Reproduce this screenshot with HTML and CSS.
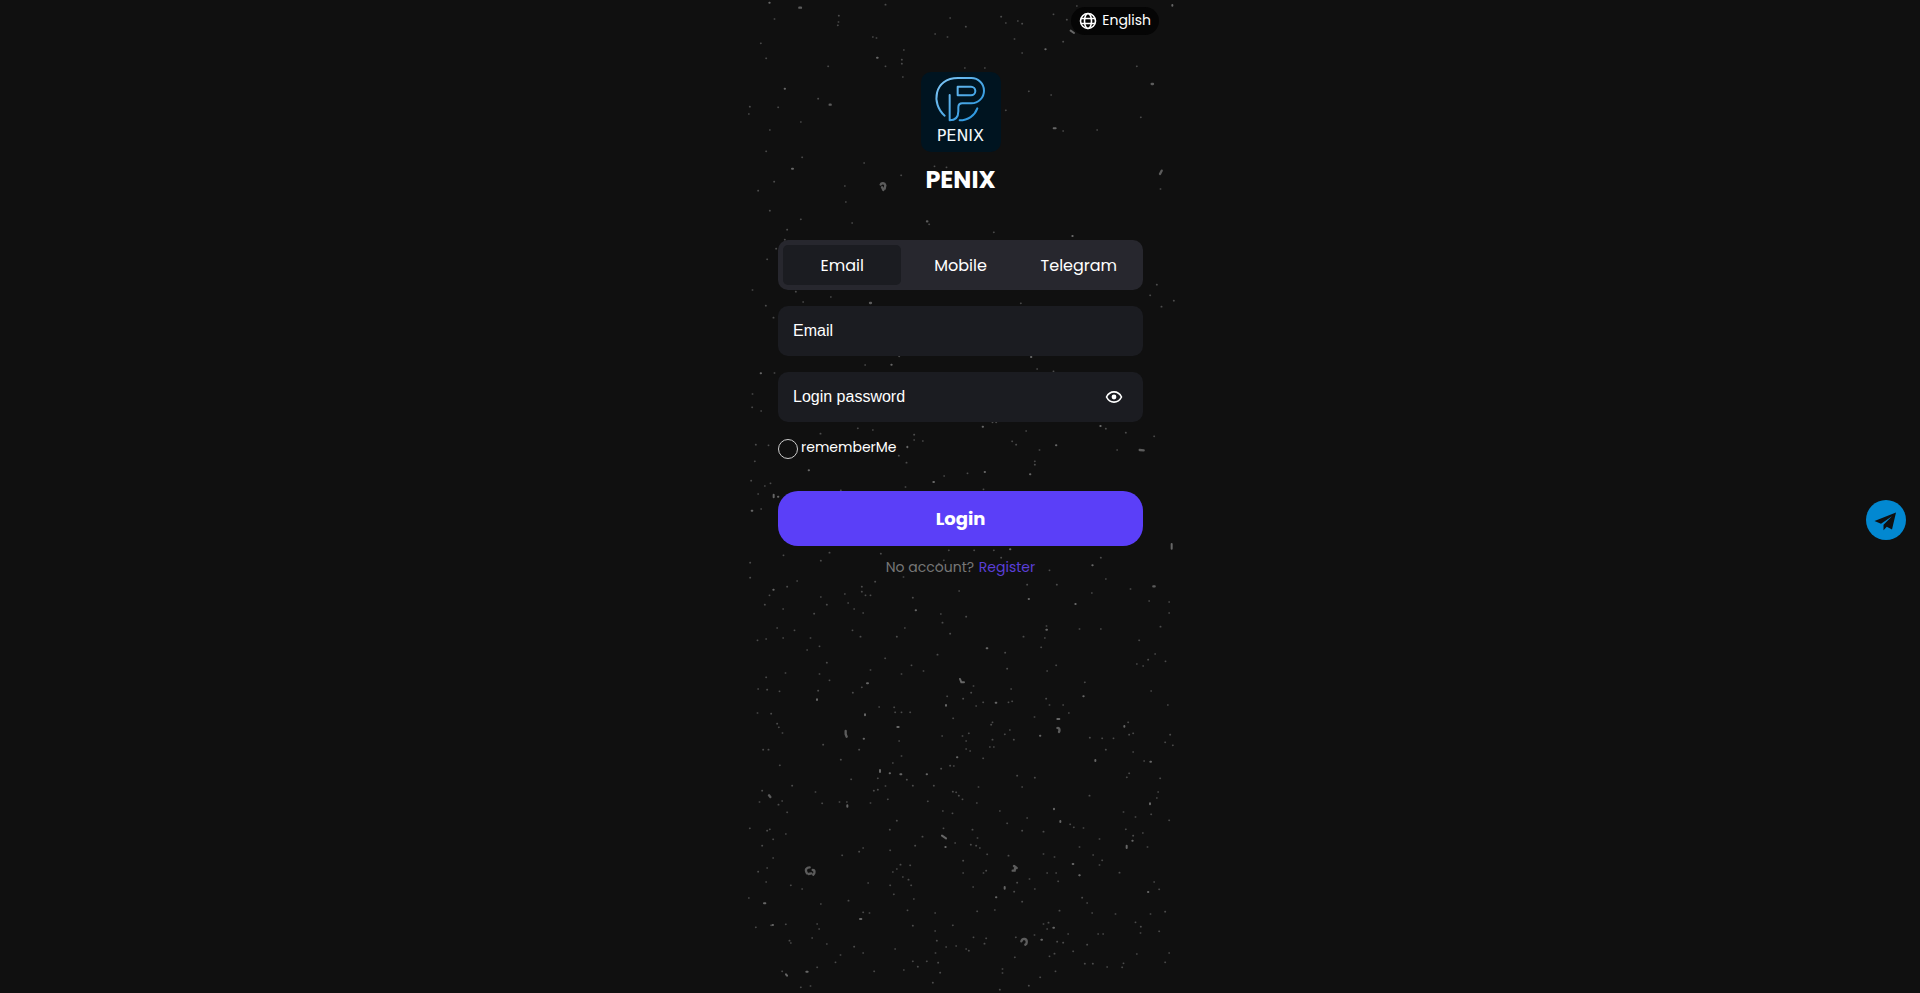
FILE: index.html
```html
<!DOCTYPE html>
<html lang="en">
<head>
  <meta charset="UTF-8">
  <meta name="viewport" content="width=device-width, initial-scale=1.0">
  <title>PENIX</title>
  <link rel="stylesheet" href="styles.css">
</head>
<body>
  <div class="page">
    <!-- dust specks behind the form -->
    <svg class="dust" viewBox="15 0 1290 2979" preserveAspectRatio="xMidYMin slice" aria-hidden="true">
      <path class="dust-small" d="M62 130h1M78 175h1M103 57h1M296 47h1M295 66h1M293 76h1M436 14h1M630 54h1M677 80h1M585 102h1M622 111h1M398 111h1M409 114h1M264 199h1M491 150h1M485 179h1M485 191h1M436 199h1M488 231h1M674 204h1M734 204h1M783 50h1M797 69h1M833 63h1M846 71h1M823 117h1M846 159h1M940 43h1M980 59h1M969 125h1M1010 18h1M1190 199h1M866 274h1M933 285h1M797 331h1M234 296h1M114 322h1M26 342h1M29 320h1M182 366h1M89 390h1M78 454h1M186 472h1M372 489h1M483 526h1M102 545h1M54 572h1M314 558h1M317 606h1M89 632h1M182 658h1M1202 352h1M969 393h1M1071 390h1M1261 567h1M619 502h1M583 499h1M141 689h1M134 719h1M108 746h1M81 778h1M336 669h1M567 673h1M761 697h1M37 870h1M167 875h1M272 891h1M189 906h1M77 917h1M100 953h1M842 910h1M1250 854h1M1230 886h1M1301 902h1M1264 920h1M477 1069h1M375 1095h1M103 1119h1M37 1182h1M891 1107h1M940 1114h1M36 1222h1M63 1233h1M353 1285h1M398 1290h1M241 1301h1M522 1304h1M522 1320h1M548 1323h1M85 1336h1M47 1334h1M44 1384h1M476 1367h1M499 1388h1M33 1442h1M74 1458h1M91 1450h1M54 1482h1M63 1527h1M302 1471h1M496 1461h1M730 1468h1M612 1428h1M682 1420h1M884 1384h1M884 1394h1M816 1324h1M828 1334h1M898 1350h1M858 1293h1M757 1267h1M768 1267h1M1157 1298h1M1242 1309h1M1131 1350h1M1097 1286h1M130 1666h1M268 1658h1M242 1682h1M30 1688h1M422 1661h1M626 1651h1M702 1651h1M761 1651h1M783 1673h1M611 1681h1M596 1691h1M1082 1673h1M1097 1737h1M928 1711h1M490 1731h1M405 1745h1M365 1760h1M365 1775h1M376 1786h1M391 1786h1M88 1786h1M141 1760h1M171 1743h1M314 1782h1M242 1791h1M30 1733h1M324 1809h1M74 1814h1M260 1814h1M129 1827h1M342 1827h1M369 1839h1M222 1841h1M518 1793h1M657 1773h1M602 1842h1M678 1850h1M607 1868h1M494 1884h1M470 1910h1M111 1884h1M163 1891h1M337 1891h1M361 1910h1M52 1921h1M78 1917h1M129 1914h1M211 1914h1M238 1939h1M201 1950h1M630 1901h1M592 1964h1M435 1975h1M260 1988h1M514 1996h1M550 2013h1M391 2010h1M136 2019h1M238 2022h1M484 2022h1M78 2032h1M268 2041h1M365 2062h1M338 2078h1M54 2067h1M81 2069h1M118 2074h1M234 2072h1M795 1958h1M801 2006h1M921 2013h1M948 1996h1M903 1942h1M850 1910h1M914 1914h1M919 1878h1M1018 1887h1M1082 1887h1M1055 1779h1M1171 1767h1M950 1754h1M861 1754h1M1227 1803h1M1287 1806h1M1287 1839h1M1261 1880h1M1197 1921h1M1245 1962h1M1224 1979h1M1276 1984h1M1190 1992h1M1209 1998h1M1034 2047h1M1233 2073h1M1283 2115h1M813 2067h1M700 2058h1M693 2078h1M669 2096h1M621 2089h1M708 2118h1M729 2107h1M805 2107h1M816 2104h1M918 2096h1M928 2115h1M969 2115h1M986 2139h1M883 2151h1M639 2155h1M757 2167h1M753 2174h1M809 2190h1M794 2203h1M821 2219h1M757 2219h1M749 2241h1M761 2241h1M686 2200h1M667 2208h1M678 2223h1M606 2208h1M678 2247h1M690 2253h1M729 2275h1M630 2297h1M603 2306h1M641 2298h1M462 2122h1M465 2137h1M484 2137h1M510 2137h1M417 2121h1M52 2139h1M93 2141h1M111 2171h1M116 2182h1M127 2199h1M477 2223h1M484 2268h1M458 2289h1M357 2249h1M249 2234h1M302 2279h1M69 2249h1M85 2249h1M119 2296h1M333 2338h1M500 2339h1M413 2335h1M831 2327h1M884 2333h1M1049 2213h1M1086 2215h1M1120 2215h1M1179 2200h1M1167 2204h1M1164 2167h1M1290 2204h1M1275 2227h1M1298 2236h1M1097 2249h1M1179 2256h1M1212 2283h1M1167 2320h1M1160 2332h1M1260 2335h1"/>
      <path class="dust-small" d="M156 2357h1M226 2376h1M66 2372h1M58 2406h1M115 2414h1M126 2403h1M141 2437h1M246 2410h1M298 2406h1M320 2406h1M391 2409h1M401 2372h1M413 2369h1M443 2398h1M436 2358h1M518 2357h1M581 2357h1M563 2404h1M608 2433h1M637 2440h1M638 2375h1M648 2377h1M656 2387h1M667 2398h1M710 2409h1M715 2361h1M779 2433h1M846 2361h1M801 2470h1M861 2454h1M846 2492h1M910 2495h1M990 2473h1M1001 2482h1M1030 2484h1M1048 2387h1M1078 2517h1M1186 2451h1M1150 2436h1M1157 2488h1M1179 2507h1M1208 2499h1M1233 2443h1M1254 2376h1M1250 2394h1M1287 2461h1M1222 2541h1M1018 2541h1M1059 2565h1M1086 2581h1M1078 2595h1M910 2562h1M943 2571h1M921 2619h1M948 2619h1M954 2644h1M1018 2626h1M868 2637h1M831 2648h1M884 2667h1M822 2675h1M805 2567h1M741 2563h1M719 2544h1M708 2537h1M692 2534h1M712 2514h1M697 2489h1M645 2529h1M669 2582h1M669 2619h1M730 2619h1M738 2612h1M699 2661h1M547 2510h1M525 2537h1M610 2485h1M470 2462h1M449 2489h1M450 2551h1M369 2544h1M357 2555h1M306 2566h1M481 2594h1M510 2596h1M470 2607h1M458 2616h1M488 2631h1M505 2639h1M450 2656h1M461 2683h1M521 2697h1M513 2656h1M384 2649h1M186 2667h1M152 2656h1M78 2646h1M81 2604h1M54 2615h1M99 2574h1M66 2537h1M99 2518h1M81 2492h1M89 2488h1M137 2502h1M29 2485h1M26 2694h1M325 2702h1M242 2712h1M369 2737h1M388 2739h1M502 2731h1M585 2739h1M711 2734h1M764 2730h1M846 2705h1M958 2732h1M1026 2693h1M1041 2709h1M1056 2739h1M1126 2742h1M1186 2767h1M1202 2780h1M1201 2799h1M1231 2742h1M1275 2735h1M1257 2668h1M1242 2646h1M1138 2618h1M1257 2794h1M1287 2859h1M1190 2862h1M1275 2887h1M1150 2890h1M1146 2902h1M1101 2901h1M1058 2891h1M1034 2891h1M1041 2834h1M1074 2802h1M1089 2802h1M984 2802h1M999 2854h1M943 2861h1M928 2869h1M951 2825h1M969 2828h1M921 2787h1M910 2772h1M925 2768h1M883 2805h1M827 2812h1M824 2872h1M787 2907h1M787 2919h1M900 2932h1M946 2914h1M866 2957h1M779 2969h1M738 2815h1M733 2831h1M700 2812h1M678 2847h1M686 2852h1M648 2838h1M618 2841h1M590 2822h1M586 2859h1M585 2793h1M638 2776h1M518 2777h1M465 2847h1M560 2884h1M594 2888h1M533 2900h1M518 2884h1M491 2910h1M402 2914h1M600 2918h1M578 2948h1M369 2859h1M342 2840h1M301 2865h1M286 2887h1M231 2902h1M260 2832h1M216 2814h1M148 2822h1M152 2829h1M231 2772h1M237 2787h1M137 2773h1M93 2776h1M47 2782h1M126 2914h1M182 2962h1M211 2958h1"/>
      <path class="dust-mid" d="M88 8h1M134 266h1M411 173h2M916 148h1M941 385h6M1297 15v2M156 506h3M992 92l10 7M502 1340v2M35 1532h2M206 1411h1M580 1446h2M734 1416h1M870 1423h1M948 1336h1M728 1280h1M1081 1278h1M101 1484v8M114 1490h1M810 1648h1M1057 1696h1M100 1769h1M1295 1632v14M527 1831h1M866 1797h1M1006 1812h1M740 1945h2M919 1889h2M381 2050h3M231 2098v2M1030 2089h1M660 2037l4 10h8M618 2115v2M767 2108h2M375 2143v3M472 2181h4M371 2216h1M420 2310v6M449 2320h1M481 2323h3M560 2323h1M651 2272h1M900 2207h1M952 2157h6M1153 2178v2M1231 2285h2M1066 2280v3M873 1071h1M454 1094h1M62 1120h1M997 708h1M942 2426v2M961 2463v3M1160 2537v7M1230 2410v3M1177 2522h1M998 2592h2M1018 2626h1M794 2661v5M768 2692h1M1224 2676h1M72 2710h4M360 2757h4M322 2416v4M606 2507l12 8M616 2541h1M904 2819h2M940 2783h2M138 2923l3 4M199 2915h4M98 2775h1"/>
      <path class="dust-big" d="M178 23h5M269 314h3M1235 252h4M1265 512l-5 10M422 554c2-6 12-6 14 2l-2 10M426 562l4 8M561 664h1M390 909h3M1199 1350l12 1M1240 1759h4M317 2193v10l3 7M952 2184c6-2 8 6 5 12M87 2386l4 5M201 2620c-8-12 0-18 8-18M206 2622l8-2M218 2610c8 0 6 12 2 14M822 2598l8 6M818 2612h6l1-6M844 2824c4-12 18-8 16 4q0 4-4 6"/>
    </svg>

    <header class="topbar">
      <button type="button" class="lang">
        <svg class="lang-icon" viewBox="0 0 18 18" aria-hidden="true">
          <circle cx="9" cy="9" r="7.500"/>
          <ellipse cx="9" cy="9" rx="3.500" ry="7.500"/>
          <path d="M2 6.500h14M2 11.500h14"/>
        </svg>
        English
      </button>
    </header>

    <main class="content">
      <svg class="logo" viewBox="0 0 240 240" role="img" aria-label="PENIX logo">
        <defs>
          <linearGradient id="stroke" gradientUnits="userSpaceOnUse" x1="60" y1="20" x2="180" y2="140">
            <stop offset="0" stop-color="#7cc4f4"/>
            <stop offset="1" stop-color="#2492dc"/>
          </linearGradient>
        </defs>
        <g class="logo-mark" stroke="url(#stroke)">
          <path d="M71 131C30 96 38 18 111 18h40a38 38 0 0 1 0 76h-27q-12 0-12 12v12q0 27-26 27V69"/>
          <path d="M110 44h40a13 13 0 0 1 0 26h-40z"/>
          <path d="M169 109c-8 22-28 36-53 36"/>
        </g>
        <text class="logo-text" x="118" y="207" text-anchor="middle">PENIX</text>
      </svg>
      <h1 class="title">PENIX</h1>

      <div class="tabs">
        <button type="button" class="tab active">Email</button>
        <button type="button" class="tab">Mobile</button>
        <button type="button" class="tab">Telegram</button>
      </div>

      <form class="form">
        <div class="field">
          <input type="email" id="email" placeholder="Email" aria-label="Email">
        </div>
        <div class="field">
          <input type="password" id="password" placeholder="Login password" aria-label="Login password">
          <button type="button" class="eye" aria-label="Show password">
            <svg viewBox="0 0 18 18" aria-hidden="true">
              <path d="M1.500 9C3.200 5.600 5.800 3.900 9 3.900s5.800 1.700 7.500 5.100c-1.700 3.400-4.300 5.100-7.500 5.100S3.200 12.400 1.500 9z"/>
              <circle cx="9" cy="9" r="2.400"/>
            </svg>
          </button>
        </div>
        <div class="remember">
          <input type="checkbox" id="remember">
          <label for="remember">rememberMe</label>
        </div>
        <button type="submit" class="login-btn">Login</button>
      </form>

      <p class="signup">No account? <a href="#">Register</a></p>
    </main>
  </div>

  <a class="telegram" href="#" aria-label="Telegram support">
    <svg viewBox="0 0 40 40" aria-hidden="true">
      <path d="M30 12.500 8.500 21l6.500 2.800L26 16.200l-8.500 8.600v5.400l3.300-3.400 5.200 2.800z"/>
    </svg>
  </a>
</body>
</html>
```
FILE: styles.css
```css
* {
  margin: 0;
  padding: 0;
  box-sizing: border-box;
}

body {
  font-family: Poppins, Inter, sans-serif;
  background: #101010;
  color: #fff;
  min-height: 100vh;
}

button {
  font-family: inherit;
  color: inherit;
  border: none;
  background: none;
  cursor: pointer;
}

.page {
  position: relative;
  max-width: 430px;
  min-height: 100vh;
  margin: 0 auto;
  overflow: hidden;
}

.dust {
  position: absolute;
  inset: 0;
  width: 100%;
  height: 100%;
  fill: none;
  stroke-linecap: round;
}

.dust-small {
  stroke: #4c4c4c;
  stroke-width: 5;
}

.dust-mid {
  stroke: #666;
  stroke-width: 6;
}

.dust-big {
  stroke: #5c5c5c;
  stroke-width: 7;
}

.topbar {
  position: relative;
  display: flex;
  justify-content: flex-end;
  padding: 7px 16px 0;
}

.lang {
  display: flex;
  align-items: center;
  gap: 5px;
  height: 28px;
  padding: 0 8px 1px;
  border-radius: 14px;
  background: #050505;
  font-size: 14px;
}

.lang-icon {
  width: 18px;
  height: 18px;
  fill: none;
  stroke: #fff;
  stroke-width: 1.6;
}

.content {
  position: relative;
  display: flex;
  flex-direction: column;
  align-items: center;
  padding: 37px 32px 40px 33px;
}

.logo {
  width: 80px;
  height: 80px;
  border-radius: 10px;
  background: #001420;
}

.logo-mark {
  fill: none;
  stroke-width: 6;
  stroke-linecap: round;
  stroke-linejoin: round;
}

.logo-text {
  fill: #f2f8fc;
  font-family: "DejaVu Sans", sans-serif;
  font-size: 48px;
}

.title {
  margin-top: 10px;
  font-size: 24px;
  font-weight: 700;
  line-height: 36px;
}

.tabs {
  display: flex;
  width: 100%;
  height: 50px;
  margin-top: 42px;
  padding: 5px;
  border-radius: 10px;
  background: #27272e;
}

.tab {
  flex: 1;
  border-radius: 5px;
  font-size: 16px;
}

.tab.active {
  background: #1b1c21;
}

.form {
  width: 100%;
}

.field {
  display: flex;
  align-items: center;
  height: 50px;
  margin-top: 16px;
  padding: 0 20px 0 15px;
  border-radius: 10px;
  background: #1b1c21;
}

.field input {
  flex: 1;
  min-width: 0;
  border: none;
  outline: none;
  background: none;
  color: #fff;
  font-family: "Liberation Sans", Arial, sans-serif;
  font-size: 16px;
}

.field input::placeholder {
  color: #fff;
}

.eye {
  width: 18px;
  height: 18px;
}

.eye svg {
  display: block;
  fill: none;
  stroke: #fff;
  stroke-width: 1.6;
}

.eye circle {
  fill: #fff;
  stroke: none;
}

.remember {
  display: flex;
  align-items: flex-start;
  gap: 3px;
  margin-top: 17px;
}

.remember input {
  appearance: none;
  width: 20px;
  height: 20px;
  border: 1px solid #ccc;
  border-radius: 50%;
}

.remember input:checked {
  background: #5b3ff8;
}

.remember label {
  font-size: 14px;
  line-height: 16px;
}

.login-btn {
  width: 100%;
  height: 55px;
  margin-top: 32px;
  border-radius: 20px;
  background: #5b3ff8;
  font-size: 18px;
  font-weight: 700;
}

.signup {
  margin-top: 10px;
  color: #777;
  font-size: 14px;
  line-height: 22px;
}

.signup a {
  margin-left: 1px;
  color: #5b3fd8;
  text-decoration: none;
}

.telegram {
  position: fixed;
  right: 14px;
  top: 50%;
  width: 40px;
  height: 40px;
  margin-top: 3px;
  border-radius: 50%;
  background: #0288d1;
}

.telegram svg {
  display: block;
  fill: #101010;
}
```
